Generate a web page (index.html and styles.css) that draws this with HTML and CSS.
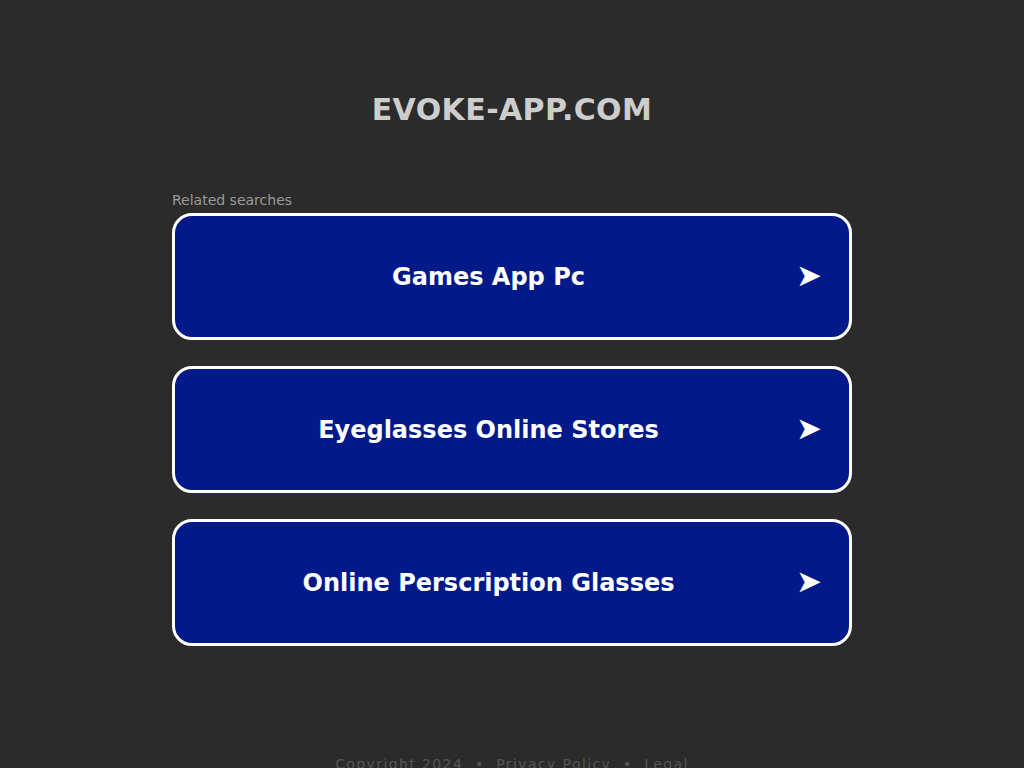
FILE: index.html
```html
<!DOCTYPE html>
<html>
<head>
<meta charset="utf-8">
<title>evoke-app.com</title>
<link rel="stylesheet" href="styles.css">
</head>
<body>
<div class="page">
  <h1 class="domain">EVOKE-APP.COM</h1>
  <div class="related">
    <div class="related-label">Related searches</div>
    <div class="links">
      <a class="link" href="#"><span class="link-text">Games App Pc</span><span class="arrow">➤</span></a>
      <a class="link" href="#"><span class="link-text">Eyeglasses Online Stores</span><span class="arrow">➤</span></a>
      <a class="link" href="#"><span class="link-text">Online Perscription Glasses</span><span class="arrow">➤</span></a>
    </div>
  </div>
  <div class="footer">Copyright 2024 &nbsp;•&nbsp; Privacy Policy &nbsp;•&nbsp; Legal</div>
</div>
</body>
</html>
```
FILE: styles.css
```css
html, body {
  margin: 0;
  padding: 0;
  background: #2b2b2b;
}
body {
  font-family: "DejaVu Sans", sans-serif;
}
.page {
  display: flex;
  flex-direction: column;
  align-items: center;
  padding-top: 92px;
}
.domain {
  margin: 0;
  font-size: 30px;
  line-height: 36px;
  font-weight: bold;
  letter-spacing: 0.4px;
  color: #cdcdcd;
  text-align: center;
}
.related {
  width: 680px;
  margin-top: 63px;
}
.related-label {
  font-size: 14px;
  line-height: 18px;
  color: #9a9a9a;
  margin-bottom: 4px;
}
.links {
  display: flex;
  flex-direction: column;
  gap: 26px;
}
.link {
  display: flex;
  align-items: center;
  height: 121px;
  border: 3px solid #ffffff;
  border-radius: 20px;
  background: #011989;
  color: #ffffff;
  text-decoration: none;
}
.link-text {
  flex: 1;
  text-align: center;
  font-size: 24px;
  font-weight: bold;
}
.arrow {
  font-size: 31px;
  margin-left: -6px;
  margin-right: 27px;
  margin-bottom: 3px;
}
.footer {
  margin-top: 109px;
  font-size: 14px;
  line-height: 18px;
  color: #565656;
  letter-spacing: 1.4px;
}
```
